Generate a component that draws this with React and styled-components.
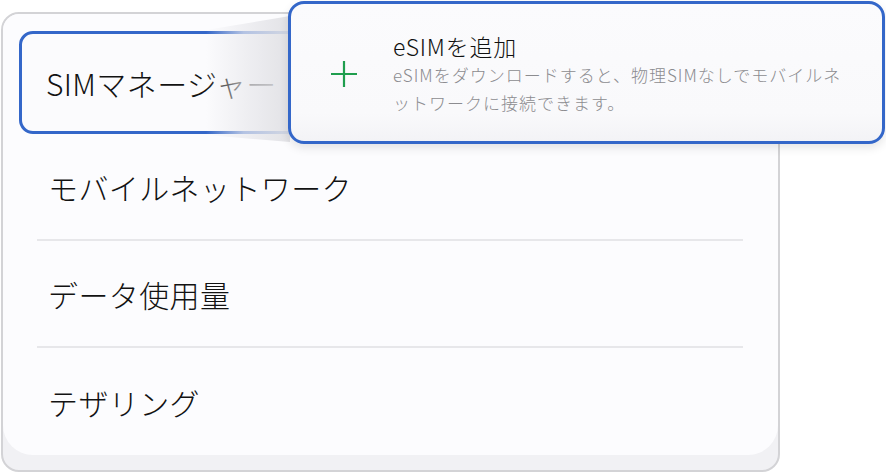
import React from 'react';
import styled, { createGlobalStyle } from 'styled-components';

const GlobalStyle = createGlobalStyle`
  html, body {
    margin: 0;
    padding: 0;
    background: #ffffff;
  }
  body {
    font-family: "Noto Sans CJK JP", "Noto Sans", sans-serif;
    color: #111;
  }
`;

const Page = styled.div`
  position: relative;
  width: 886px;
  height: 472px;
  padding: 12px 0 0 1px;
  box-sizing: border-box;
  overflow: hidden;
`;

const Panel = styled.div`
  width: 779px;
  height: 460px;
  box-sizing: border-box;
  border: 2px solid #d3d3d6;
  border-radius: 18px;
  background: #f1f1f4;
  overflow: hidden;
`;

const Card = styled.div`
  height: 441px;
  box-sizing: border-box;
  padding-top: 17px;
  background: #fcfcfe;
  border-radius: 0 0 30px 30px;
  display: flex;
  flex-direction: column;
`;

const Row = styled.div`
  display: flex;
  align-items: center;
  box-sizing: border-box;
  font-size: 30px;
  font-weight: 300;
  letter-spacing: 0.4px;
  color: #121212;
  height: ${p => (p.$active ? '103px' : '107px')};
  margin: ${p => (p.$active ? '0 16px' : '0 35px 0 34px')};
  padding-left: ${p => (p.$active ? '24px' : '11px')};
  border: ${p => (p.$active ? '3px solid #3467c9' : 'none')};
  border-radius: ${p => (p.$active ? '14px' : '0')};
  border-bottom: ${p =>
    p.$active ? '3px solid #3467c9' : p.$last ? 'none' : '2px solid #e7e7ea'};
  background: ${p => (p.$active ? '#fbfbfd' : 'transparent')};
`;

const Beam = styled.div`
  position: absolute;
  left: 206px;
  top: 16px;
  width: 84px;
  height: 126px;
  clip-path: polygon(0 14px, 100% 0, 100% 100%, 0 119px);
  background: linear-gradient(
    90deg,
    rgba(236, 236, 240, 0) 0%,
    rgba(234, 234, 238, 0.7) 45%,
    rgba(224, 224, 228, 0.92) 100%
  );
`;

const Popup = styled.div`
  position: absolute;
  left: 288px;
  top: 1px;
  width: 597px;
  height: 143px;
  box-sizing: border-box;
  border: 3px solid #3467c9;
  border-radius: 16px;
  background: linear-gradient(180deg, #fbfbfd 0%, #f9f9fb 80%, #f3f3f6 100%);
  box-shadow: 0 4px 10px rgba(0, 0, 0, 0.1);
  display: flex;
  align-items: center;
  padding: 2px 0 0 40px;
  gap: 36px;
`;

const PlusIcon = styled.svg`
  flex: none;
  width: 26px;
  height: 26px;
`;

const TextBlock = styled.div`
  display: flex;
  flex-direction: column;
`;

const Title = styled.div`
  font-size: 23px;
  font-weight: 300;
  letter-spacing: 0.8px;
  line-height: 30px;
  color: #111;
`;

const Desc = styled.div`
  font-size: 17px;
  font-weight: 300;
  line-height: 28px;
  letter-spacing: 1px;
  color: #8c8c90;
  width: 452px;
`;

const items = ['モバイルネットワーク', 'データ使用量', 'テザリング'];

export default function App() {
  return (
    <Page>
      <GlobalStyle />
      <Panel>
        <Card>
          <Row $active>SIMマネージャー</Row>
          {items.map((label, i) => (
            <Row key={label} $last={i === items.length - 1}>
              {label}
            </Row>
          ))}
        </Card>
      </Panel>
      <Beam />
      <Popup>
        <PlusIcon viewBox="0 0 26 26">
          <path d="M13 0v26M0 13h26" stroke="#1f9e4e" strokeWidth="2.2" fill="none" />
        </PlusIcon>
        <TextBlock>
          <Title>eSIMを追加</Title>
          <Desc>
            eSIMをダウンロードすると、物理SIMなしでモバイルネットワークに接続できます。
          </Desc>
        </TextBlock>
      </Popup>
    </Page>
  );
}
